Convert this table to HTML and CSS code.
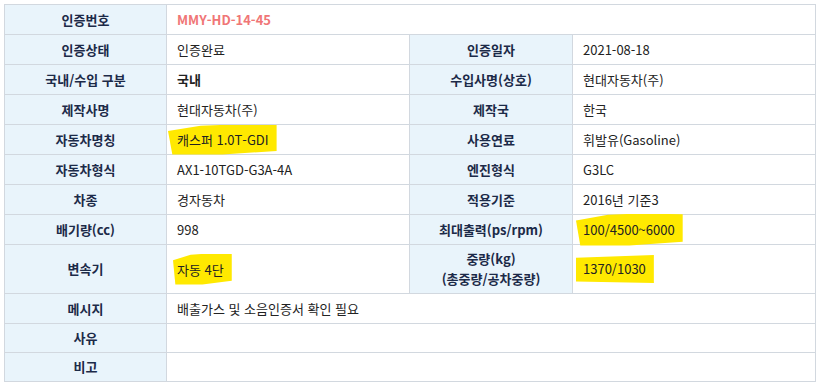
FILE: index.html
```html
<!DOCTYPE html>
<html lang="ko">
<head>
<meta charset="utf-8">
<link rel="stylesheet" href="styles.css">
</head>
<body>
<table class="info">
  <colgroup>
    <col class="c-label"><col class="c-value"><col class="c-label2"><col class="c-value">
  </colgroup>
  <tr><th>인증번호</th><td colspan="3" class="code">MMY-HD-14-45</td></tr>
  <tr><th>인증상태</th><td>인증완료</td><th>인증일자</th><td>2021-08-18</td></tr>
  <tr><th>국내/수입 구분</th><td class="strong">국내</td><th>수입사명(상호)</th><td>현대자동차(주)</td></tr>
  <tr><th>제작사명</th><td>현대자동차(주)</td><th>제작국</th><td>한국</td></tr>
  <tr><th>자동차명칭</th><td><span class="mark m1">캐스퍼 1.0T-GDI</span></td><th>사용연료</th><td>휘발유(Gasoline)</td></tr>
  <tr><th>자동차형식</th><td>AX1-10TGD-G3A-4A</td><th>엔진형식</th><td>G3LC</td></tr>
  <tr><th>차종</th><td>경자동차</td><th>적용기준</th><td>2016년 기준3</td></tr>
  <tr><th>배기량(cc)</th><td>998</td><th>최대출력(ps/rpm)</th><td><span class="mark m2">100/4500~6000</span></td></tr>
  <tr class="tall"><th>변속기</th><td><span class="mark m3">자동 4단</span></td><th class="two">중량(kg)<br>(총중량/공차중량)</th><td><span class="mark m4">1370/1030</span></td></tr>
  <tr><th>메시지</th><td colspan="3">배출가스 및 소음인증서 확인 필요</td></tr>
  <tr class="short"><th>사유</th><td colspan="3"></td></tr>
  <tr class="short"><th>비고</th><td colspan="3"></td></tr>
</table>
</body>
</html>
```

FILE: styles.css
```css
html, body {
  margin: 0;
  padding: 0;
  background: #ffffff;
}
body {
  padding: 4px 0 0 4px;
  font-family: "Noto Sans CJK KR", "Open Sans", sans-serif;
  font-size: 13px;
  color: #222222;
}
.info {
  border-collapse: collapse;
  table-layout: fixed;
  width: 812px;
}
.c-label { width: 162px; }
.c-label2 { width: 163px; }
.c-value { width: 243px; }
.info th, .info td {
  border: 1px solid #d2d8df;
  height: 30px;
  padding: 0 10px;
  line-height: 16px;
  box-sizing: border-box;
}
.info th {
  background: #e9f4fb;
  color: #1c2a48;
  font-weight: bold;
  text-align: center;
  padding: 0;
}
.info th.two { line-height: 20px; }
.info td {
  text-align: left;
  font-weight: normal;
}
.info tr.tall th, .info tr.tall td { height: 49px; }
.info tr.short th, .info tr.short td { height: 29px; }
.info td.code {
  color: #f07676;
  font-weight: bold;
}
.info td.strong { font-weight: bold; }
.mark {
  display: inline-block;
  vertical-align: middle;
  background: #ffe900;
  line-height: 16px;
  padding: 7px 8px 7px 9px;
  margin: -4px 0 -4px -9px;
  clip-path: polygon(0 22%, 30% 4%, 60% 0, 100% 2%, 100% 88%, 50% 100%, 4% 100%);
}
.m1 { position: relative; top: 0; }
.m2 { margin-left: -7px; padding: 8px 8px 8px 7px; margin-top: -5px; margin-bottom: -5px; }
.m3 { margin-left: -4px; padding: 8px 8px 7px 4px; }
.m4 { margin-left: -7px; padding: 6px 8px 6px 7px; clip-path: polygon(0 10%, 100% 0, 100% 100%, 0 95%); }
```
